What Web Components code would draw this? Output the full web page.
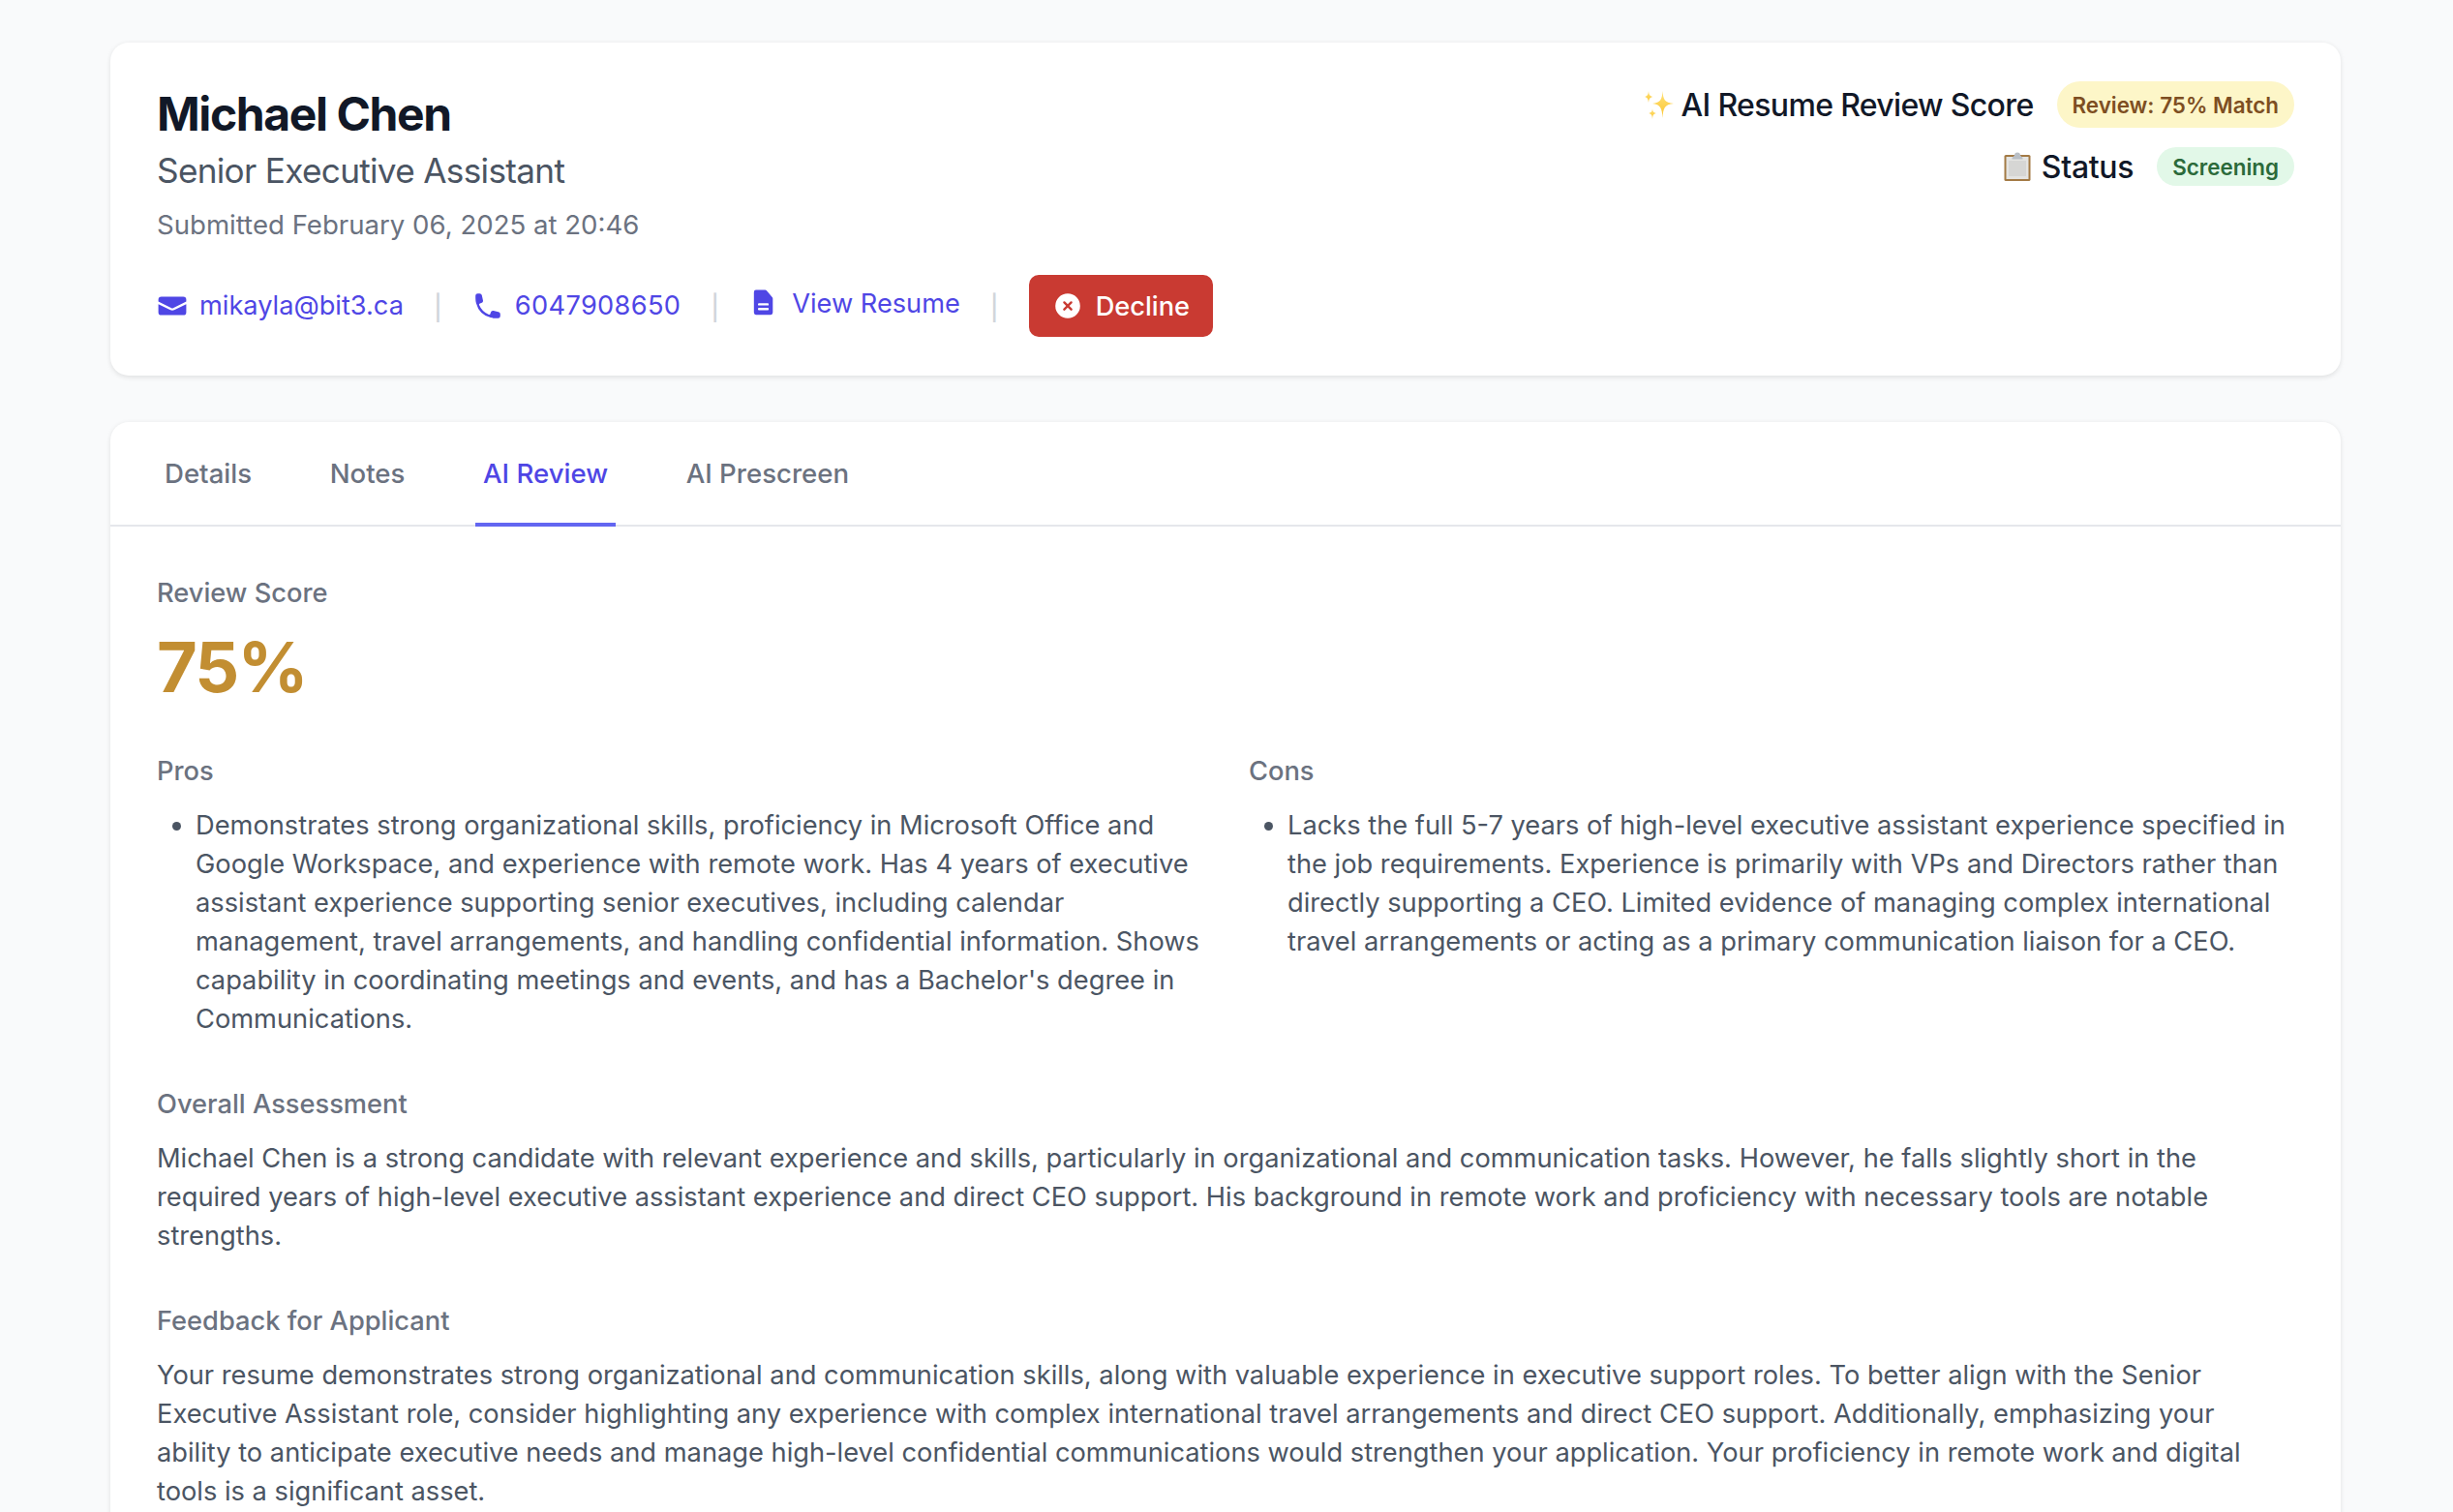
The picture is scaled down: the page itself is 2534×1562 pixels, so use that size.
<!DOCTYPE html>
<html lang="en">
<head>
<meta charset="utf-8">
<title>Michael Chen - AI Review</title>
<style>
  html, body { margin: 0; height: 100%; overflow: hidden; }
  body { background: #f9fafb; font-family: Inter, "Liberation Sans", sans-serif; color: #4b5563; }
</style>
</head>
<body>
<review-page>
  <candidate-header name="Michael Chen" role="Senior Executive Assistant" submitted="Submitted February 06, 2025 at 20:46">
    <score-row slot="scores" label="AI Resume Review Score" icon="sparkles" tone="yellow" size="tall" tight="-0.66px">Review: 75% Match</score-row>
    <score-row slot="scores" label="Status" icon="clipboard" tone="green" tight="-0.3px">Screening</score-row>
    <contact-link slot="links" icon="mail">mikayla@bit3.ca</contact-link>
    <link-sep slot="links"></link-sep>
    <contact-link slot="links" icon="phone" style="letter-spacing: 0.35px">6047908650</contact-link>
    <link-sep slot="links"></link-sep>
    <contact-link slot="links" icon="doc" raised>View Resume</contact-link>
    <link-sep slot="links"></link-sep>
    <decline-button slot="links">Decline</decline-button>
  </candidate-header>
  <review-card>
    <tab-bar slot="tabs" active="AI Review" tabs="Details,Notes,AI Review,AI Prescreen"></tab-bar>
    <review-section label="Review Score"><score-value>75%</score-value></review-section>
    <two-columns>
      <review-section label="Pros">
        <bullet-item>Demonstrates strong organizational skills, proficiency in Microsoft Office and Google Workspace, and experience with remote work. Has 4 years of executive assistant experience supporting senior executives, including calendar management, travel arrangements, and handling confidential information. Shows capability in coordinating meetings and events, and has a Bachelor's degree in Communications.</bullet-item>
      </review-section>
      <review-section label="Cons">
        <bullet-item>Lacks the full 5-7 years of high-level executive assistant experience specified in the job requirements. Experience is primarily with VPs and Directors rather than directly supporting a CEO. Limited evidence of managing complex international travel arrangements or acting as a primary communication liaison for a CEO.</bullet-item>
      </review-section>
    </two-columns>
    <review-section label="Overall Assessment">Michael Chen is a strong candidate with relevant experience and skills, particularly in organizational and communication tasks. However, he falls slightly short in the required years of high-level executive assistant experience and direct CEO support. His background in remote work and proficiency with necessary tools are notable strengths.</review-section>
    <review-section label="Feedback for Applicant" style="padding-right: 6px">Your resume demonstrates strong organizational and communication skills, along with valuable experience in executive support roles. To better align with the Senior Executive Assistant role, consider highlighting any experience with complex international travel arrangements and direct CEO support. Additionally, emphasizing your ability to anticipate executive needs and manage high-level confidential communications would strengthen your application. Your proficiency in remote work and digital tools is a significant asset.</review-section>
  </review-card>
</review-page>

<script>
const ICONS = {
  mail: '<path d="M3 4a2 2 0 00-2 2v1.161l8.441 4.221a1.25 1.25 0 001.118 0L19 7.162V6a2 2 0 00-2-2H3z"/><path d="M19 8.839l-7.77 3.885a2.75 2.75 0 01-2.46 0L1 8.839V14a2 2 0 002 2h14a2 2 0 002-2V8.839z"/>',
  phone: '<path fill-rule="evenodd" clip-rule="evenodd" d="M2 3.5A1.5 1.5 0 013.5 2h1.148a1.5 1.5 0 011.465 1.175l.716 3.223a1.5 1.5 0 01-1.052 1.767l-.933.267c-.41.117-.643.555-.48.95a11.542 11.542 0 006.254 6.254c.395.163.833-.07.95-.48l.267-.933a1.5 1.5 0 011.767-1.052l3.223.716A1.5 1.5 0 0118 15.352V16.5a1.5 1.5 0 01-1.5 1.5H15c-1.149 0-2.263-.15-3.326-.43A13.022 13.022 0 012.43 8.326 13.019 13.019 0 012 5V3.5z"/>',
  doc: '<g transform="translate(.4 -1) scale(.87 1)"><path fill-rule="evenodd" clip-rule="evenodd" d="M4.5 2A1.5 1.5 0 003 3.5v13A1.5 1.5 0 004.5 18h11a1.5 1.5 0 001.5-1.5V7.621a1.5 1.5 0 00-.44-1.06l-4.12-4.122A1.5 1.5 0 0011.378 2H4.5zm2.25 8.5a.75.75 0 000 1.5h6.5a.75.75 0 000-1.5h-6.5zm0 3a.75.75 0 000 1.5h6.5a.75.75 0 000-1.5h-6.5z"/></g>',
  xcircle: '<path fill-rule="evenodd" clip-rule="evenodd" d="M10 18a8 8 0 100-16 8 8 0 000 16zM8.28 7.22a.75.75 0 00-1.06 1.06L8.94 10l-1.72 1.72a.75.75 0 101.06 1.06L10 11.06l1.72 1.72a.75.75 0 101.06-1.06L11.06 10l1.72-1.72a.75.75 0 00-1.06-1.06L10 8.94 8.28 7.22z"/>'
};

const EMOJI = {
  sparkles: `<svg width="32" height="32" viewBox="0 0 32 32">
    <defs><linearGradient id="sp" x1="0" y1="0" x2="0" y2="1"><stop offset="0" stop-color="#ffe27a"/><stop offset="1" stop-color="#fbc531"/></linearGradient></defs>
    <path fill="url(#sp)" d="M19.5 2 C20.2 11 21.4 13.8 31 15 C21.4 16.2 20.2 19.4 19.5 30 C18.8 19.4 17.4 16.2 9 15 C17.4 13.8 18.8 11 19.5 2Z"/>
    <path fill="url(#sp)" d="M5 2 C5.4 6 6.2 7.2 9.5 8 C6.2 8.8 5.4 10 5 14 C4.6 10 3.8 8.8 1 8 C3.8 7.2 4.6 6 5 2Z"/>
    <path fill="url(#sp)" d="M9 20 C9.3 23.4 9.9 24.2 13 25 C9.9 25.8 9.3 27 9 31 C8.7 27 8.1 25.8 5 25 C8.1 24.2 8.7 23.4 9 20Z"/>
  </svg>`,
  clipboard: `<svg width="32" height="32" viewBox="0 0 32 32">
    <rect x="2.5" y="4" width="27" height="27" rx="1.6" fill="#a37a45"/>
    <rect x="4.5" y="6" width="23" height="23" fill="#e4e4e2"/>
    <rect x="7" y="10" width="18" height="16" fill="#d6d6d4"/>
    <path d="M10.5 7 L13 4.4 A3 3 0 0 1 19 4.4 L21.5 7 V8.5 H10.5Z" fill="#b9bfc6"/>
  </svg>`
};

class ReviewPage extends HTMLElement {
  connectedCallback() {
    this.attachShadow({ mode: 'open' });
    this.shadowRoot.innerHTML = `
      <style>
        :host { display: flex; flex-direction: column; gap: 48px; width: 2304px; margin-left: 114px; padding-top: 44px; }
      </style>
      <slot></slot>
    `;
  }
}

class CandidateHeader extends HTMLElement {
  connectedCallback() {
    this.attachShadow({ mode: 'open' });
    this.shadowRoot.innerHTML = `
      <style>
        :host {
          display: flex;
          justify-content: space-between;
          background: #fff;
          border-radius: 19px;
          padding: 40px 48px;
          box-shadow: 0 1.6px 5px rgba(0, 0, 0, 0.1);
        }
        h1 { margin: 2px 0 0; font-size: 48px; line-height: 64px; font-weight: 700; color: #111827; letter-spacing: -1.4px; }
        .role { margin-top: 6px; font-size: 35.2px; line-height: 40px; color: #4b5563; letter-spacing: -0.7px; }
        .submitted { margin-top: 18px; font-size: 27.6px; line-height: 36px; color: #6b7280; }
        .links { display: flex; align-items: center; gap: 31px; margin-top: 34px; }
        .scores { display: flex; flex-direction: column; align-items: flex-end; gap: 20px; }
      </style>
      <div>
        <h1>${this.getAttribute('name')}</h1>
        <div class="role">${this.getAttribute('role')}</div>
        <div class="submitted">${this.getAttribute('submitted')}</div>
        <div class="links"><slot name="links"></slot></div>
      </div>
      <div class="scores"><slot name="scores"></slot></div>
    `;
  }
}

class ScoreRow extends HTMLElement {
  connectedCallback() {
    const yellow = this.getAttribute('tone') === 'yellow';
    const icon = this.getAttribute('icon');
    this.attachShadow({ mode: 'open' });
    this.shadowRoot.innerHTML = `
      <style>
        :host { display: flex; align-items: center; gap: 24px; }
        .label { display: flex; align-items: center; gap: ${icon === 'sparkles' ? 6 : 9}px; font-size: 32px; font-weight: 500; color: #111827; letter-spacing: ${this.getAttribute('tight')}; }
        svg { display: block; }
        .pill {
          padding: 0 16px;
          height: ${this.getAttribute('size') === 'tall' ? 48 : 40}px;
          display: flex;
          align-items: center;
          border-radius: 24px;
          font-size: 22.4px;
          font-weight: 600;
          background: ${yellow ? '#fdf6c8' : '#e2f8e8'};
          color: ${yellow ? '#7d4e22' : '#2b6a3a'};
        }
      </style>
      <div class="label">${EMOJI[icon]}<span>${this.getAttribute('label')}</span></div>
      <div class="pill"><slot></slot></div>
    `;
  }
}

class ContactLink extends HTMLElement {
  connectedCallback() {
    this.attachShadow({ mode: 'open' });
    this.shadowRoot.innerHTML = `
      <style>
        :host { display: flex; align-items: center; gap: 12px; color: #4f46e5; font-size: 27.2px; line-height: 40px; }
        :host([raised]) { padding-bottom: 5px; }
        svg { width: 32px; height: 32px; fill: currentColor; display: block; }
      </style>
      <svg viewBox="0 0 20 20">${ICONS[this.getAttribute('icon')]}</svg>
      <span><slot></slot></span>
    `;
  }
}

class LinkSep extends HTMLElement {
  connectedCallback() {
    this.attachShadow({ mode: 'open' });
    this.shadowRoot.innerHTML = `
      <style>
        :host { display: block; color: #d1d5db; font-size: 25.6px; font-weight: 500; line-height: 40px; padding-top: 4px; }
      </style>
      |
    `;
  }
}

class DeclineButton extends HTMLElement {
  connectedCallback() {
    this.attachShadow({ mode: 'open' });
    this.shadowRoot.innerHTML = `
      <style>
        :host {
          display: flex;
          align-items: center;
          gap: 13px;
          height: 64px;
          padding: 0 24px;
          background: #c93a32;
          border-radius: 10px;
          color: #fff;
          font-size: 27.2px;
          font-weight: 500;
        }
        svg { width: 32px; height: 32px; fill: currentColor; display: block; }
      </style>
      <svg viewBox="0 0 20 20">${ICONS.xcircle}</svg>
      <span><slot></slot></span>
    `;
  }
}

class ReviewCard extends HTMLElement {
  connectedCallback() {
    this.attachShadow({ mode: 'open' });
    this.shadowRoot.innerHTML = `
      <style>
        :host {
          display: block;
          background: #fff;
          border-radius: 19px;
          box-shadow: 0 1.6px 5px rgba(0, 0, 0, 0.1);
        }
        .body { display: flex; flex-direction: column; gap: 48px; padding: 49px 48px 48px; }
      </style>
      <slot name="tabs"></slot>
      <div class="body"><slot></slot></div>
    `;
  }
}

class TabBar extends HTMLElement {
  connectedCallback() {
    const active = this.getAttribute('active');
    const tabs = this.getAttribute('tabs').split(',').map(t =>
      `<div class="tab${t === active ? ' on' : ''}">${t}</div>`).join('');
    this.attachShadow({ mode: 'open' });
    this.shadowRoot.innerHTML = `
      <style>
        :host { display: flex; gap: 64.6px; padding: 0 48px; border-bottom: 2px solid #e5e7eb; }
        .tab {
          padding: 33px 8px 31px;
          margin-bottom: -2px;
          border-bottom: 4px solid transparent;
          font-size: 27.6px;
          line-height: 40px;
          font-weight: 500;
          color: #6b7280;
        }
        .on { color: #4f46e5; border-bottom-color: #6366f1; }
      </style>
      ${tabs}
    `;
  }
}

class ReviewSection extends HTMLElement {
  connectedCallback() {
    this.attachShadow({ mode: 'open' });
    this.shadowRoot.innerHTML = `
      <style>
        :host { display: block; font-size: 27.26px; line-height: 40px; color: #4b5563; }
        .label { font-weight: 500; color: #6b7280; margin-bottom: 16px; }
      </style>
      <div class="label">${this.getAttribute('label')}</div>
      <slot></slot>
    `;
  }
}

class ScoreValue extends HTMLElement {
  connectedCallback() {
    this.attachShadow({ mode: 'open' });
    this.shadowRoot.innerHTML = `
      <style>
        :host { display: block; font-size: 72px; line-height: 80px; font-weight: 700; color: #c28e32; letter-spacing: -1.9px; margin-top: 4px; margin-bottom: 0; }
      </style>
      <slot></slot>
    `;
  }
}

class TwoColumns extends HTMLElement {
  connectedCallback() {
    this.attachShadow({ mode: 'open' });
    this.shadowRoot.innerHTML = `
      <style>
        :host { display: grid; grid-template-columns: 1fr 1fr; gap: 48px; }
      </style>
      <slot></slot>
    `;
  }
}

class BulletItem extends HTMLElement {
  connectedCallback() {
    this.attachShadow({ mode: 'open' });
    this.shadowRoot.innerHTML = `
      <style>
        :host { display: flex; align-items: flex-start; }
        .dot { flex: none; width: 9px; height: 9px; margin: 15.5px 15.5px 0 15.5px; border-radius: 50%; background: #4b5563; }
      </style>
      <span class="dot"></span>
      <div><slot></slot></div>
    `;
  }
}

customElements.define('review-page', ReviewPage);
customElements.define('candidate-header', CandidateHeader);
customElements.define('score-row', ScoreRow);
customElements.define('contact-link', ContactLink);
customElements.define('link-sep', LinkSep);
customElements.define('decline-button', DeclineButton);
customElements.define('review-card', ReviewCard);
customElements.define('tab-bar', TabBar);
customElements.define('review-section', ReviewSection);
customElements.define('score-value', ScoreValue);
customElements.define('two-columns', TwoColumns);
customElements.define('bullet-item', BulletItem);
</script>
</body>
</html>
